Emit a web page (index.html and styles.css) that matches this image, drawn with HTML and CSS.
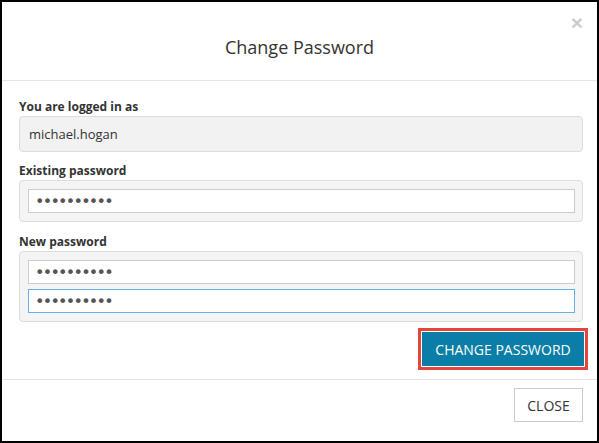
FILE: index.html
```html
<!DOCTYPE html>
<html>
<head>
<meta charset="utf-8">
<link rel="stylesheet" href="styles.css">
</head>
<body>
<div class="modal">
  <div class="modal-header">
    <h4 class="modal-title">Change Password</h4>
    <span class="close">&times;</span>
  </div>
  <div class="modal-body">
    <div class="label">You are logged in as</div>
    <div class="readonly">michael.hogan</div>
    <div class="label label-gap">Existing password</div>
    <div class="group">
      <input class="field" type="password" value="abcdefghij">
    </div>
    <div class="label label-gap2">New password</div>
    <div class="group">
      <input class="field" type="password" value="abcdefghij">
      <input class="field focused" type="password" value="abcdefghij">
    </div>
    <div class="actions">
      <button class="btn-primary">CHANGE PASSWORD</button>
    </div>
  </div>
  <div class="modal-footer">
    <button class="btn-default">CLOSE</button>
  </div>
</div>
</body>
</html>
```
FILE: styles.css
```css
html, body {
  margin: 0;
  padding: 0;
  background: #fff;
}
body {
  font-family: "Open Sans", "Liberation Sans", sans-serif;
  color: #333;
}
.modal {
  box-sizing: border-box;
  width: 599px;
  height: 443px;
  border: 2px solid #000;
  display: flex;
  flex-direction: column;
  background: #fff;
}
.modal-header {
  position: relative;
  height: 78px;
  border-bottom: 1px solid #e5e5e5;
  box-sizing: content-box;
}
.modal-title {
  margin: 0;
  padding-top: 33px;
  text-align: center;
  font-weight: 400;
  font-size: 18px;
  line-height: 25px;
  color: #333;
}
.close {
  position: absolute;
  right: 14px;
  top: 10px;
  font-family: "Liberation Sans", sans-serif;
  font-size: 21px;
  font-weight: 700;
  line-height: 21px;
  color: #000;
  opacity: 0.2;
}
.modal-body {
  padding: 17px 14px 13px 17px;
  border-bottom: 1px solid #e5e5e5;
}
.label {
  font-size: 12px;
  font-weight: 700;
  line-height: 17px;
  margin-bottom: 1px;
  color: #333;
}
.label-gap { margin-top: 10px; }
.label-gap2 { margin-top: 11px; }
.readonly {
  box-sizing: border-box;
  height: 36px;
  background: #f2f2f2;
  border: 1px solid #ddd;
  border-radius: 4px;
  padding: 0 9px;
  font-size: 13px;
  line-height: 34px;
  color: #333;
}
.group {
  background: #f4f4f4;
  border: 1px solid #ddd;
  border-radius: 4px;
  padding: 8px 7px 8px 8px;
  display: flex;
  flex-direction: column;
  gap: 5px;
}
.field {
  box-sizing: border-box;
  display: block;
  width: 100%;
  height: 24px;
  margin: 0;
  padding: 0 6px;
  border: 1px solid #ccc;
  border-radius: 0;
  background: #fff;
  font-family: "DejaVu Sans", "Open Sans", sans-serif;
  font-size: 16px;
  letter-spacing: -1.75px;
  color: #555;
  outline: none;
}
.field.focused {
  border-color: #66afe9;
}
.actions {
  display: flex;
  justify-content: flex-end;
  margin-top: 10px;
}
.btn-primary {
  height: 34px;
  width: 162px;
  margin-right: -1px;
  border: none;
  background: #0a7ea6;
  color: #fff;
  font-family: "Open Sans", "Liberation Sans", sans-serif;
  font-size: 14px;
  padding: 0;
  outline: 3px solid #e2463d;
  outline-offset: 1px;
}
.modal-footer {
  display: flex;
  justify-content: flex-end;
  padding: 8px 14px 0 0;
}
.btn-default {
  width: 69px;
  height: 34px;
  border: 1px solid #ccc;
  background: #fff;
  color: #333;
  font-family: "Open Sans", "Liberation Sans", sans-serif;
  font-size: 14px;
  padding: 0;
}
```
